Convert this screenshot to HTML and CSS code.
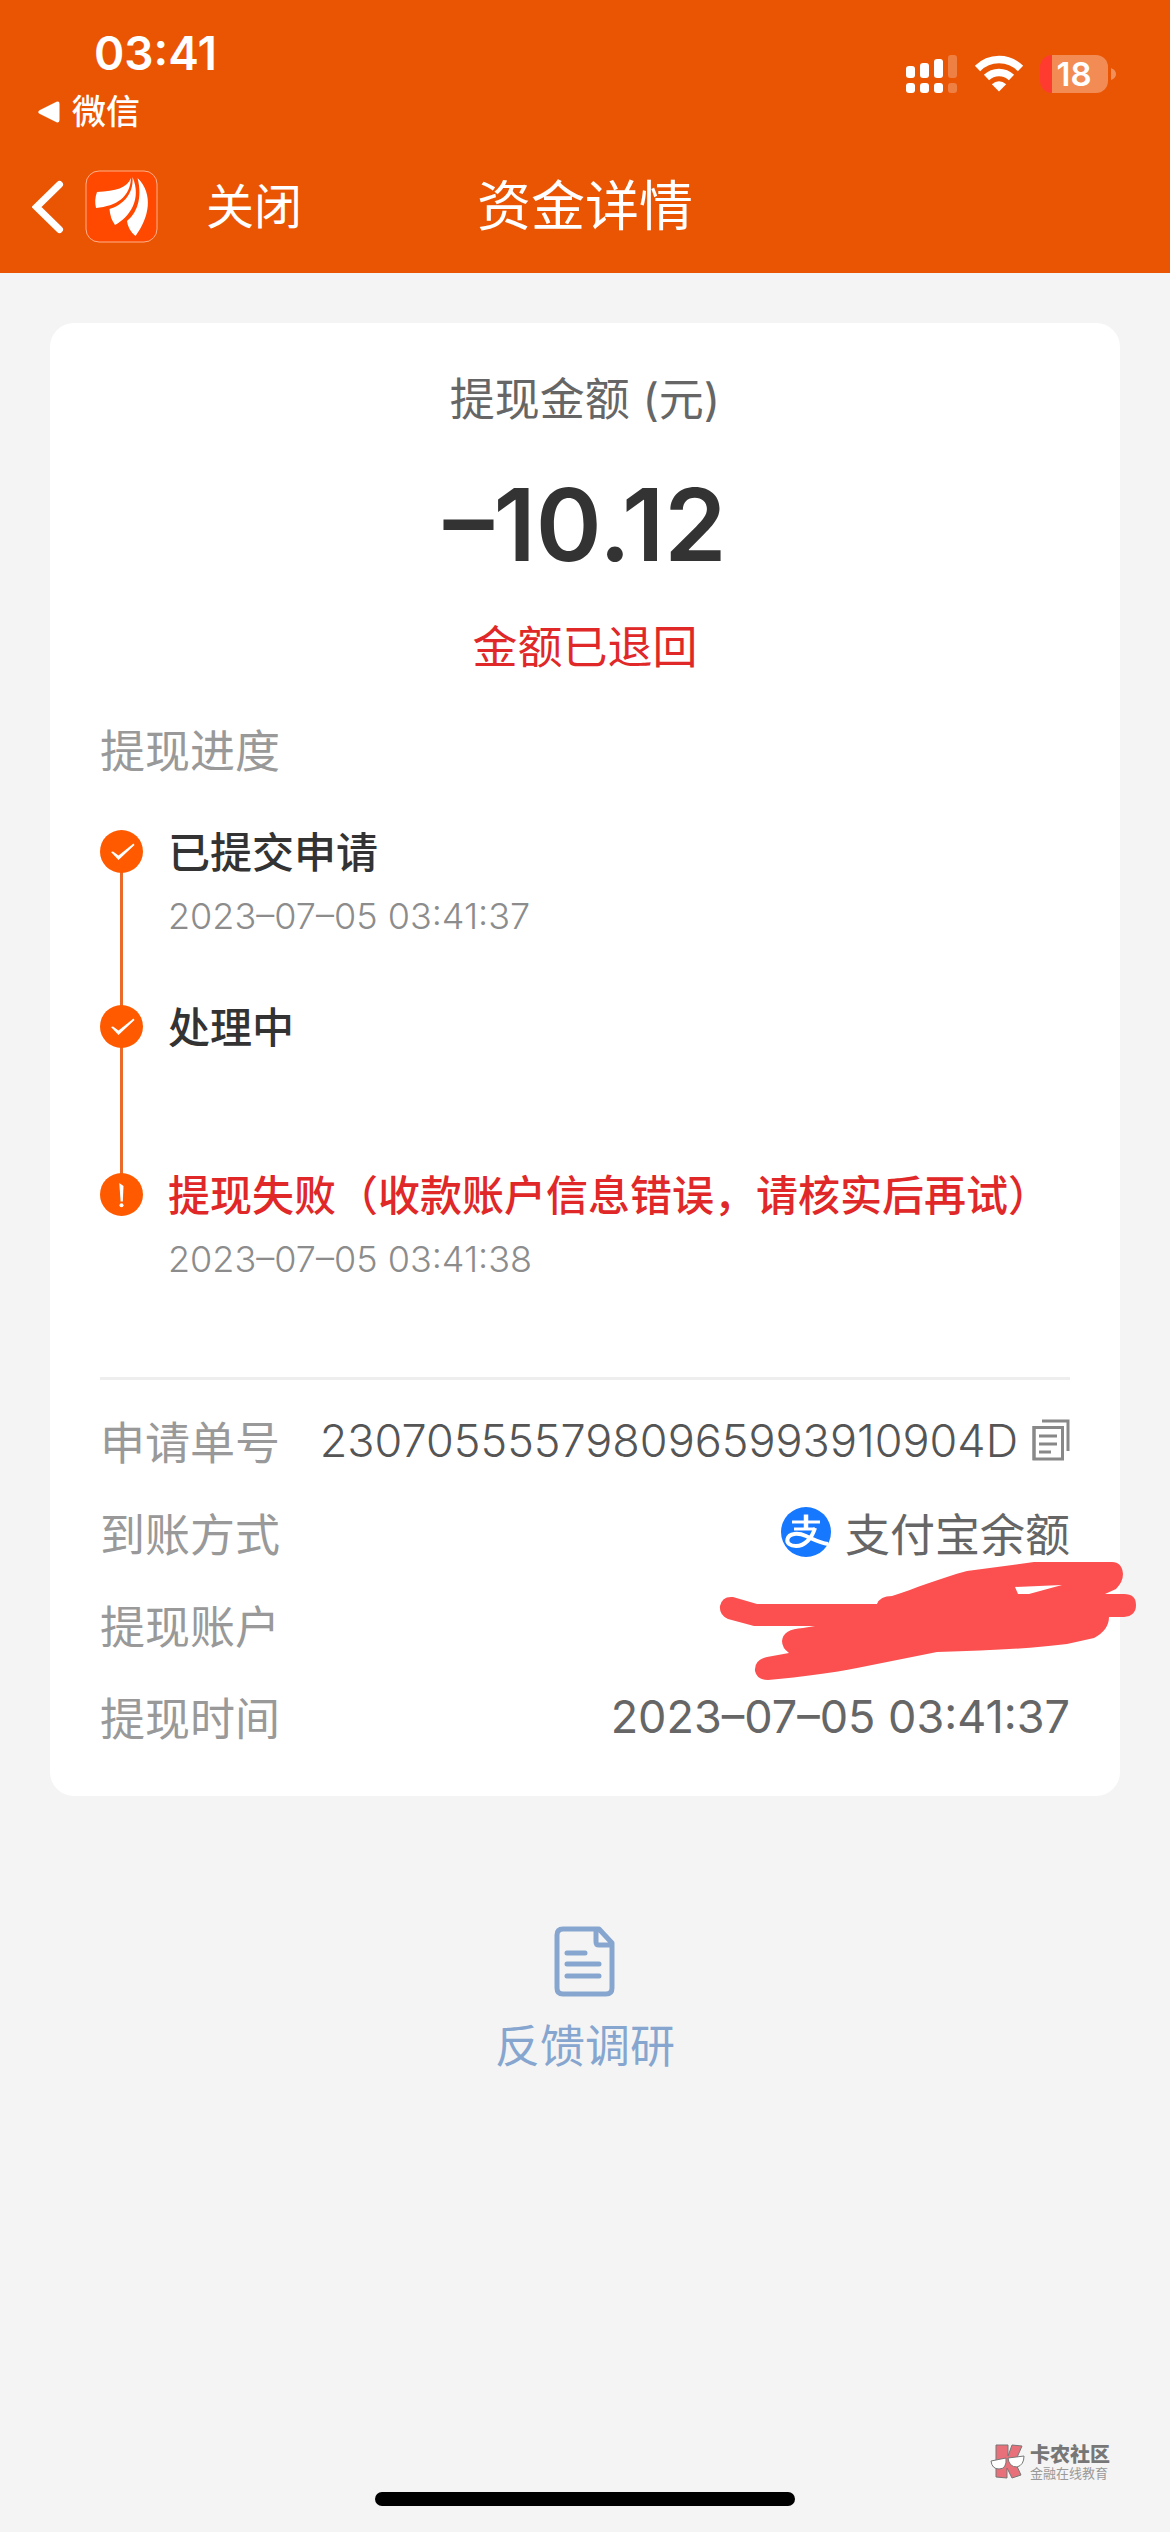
FILE: index.html
```
<!DOCTYPE html>
<html lang="zh-CN">
  <head>
    <meta charset="UTF-8" />
    <meta name="viewport" content="width=device-width, initial-scale=1.0" />
    <title>资金详情</title>
    <link rel="stylesheet" href="styles.css">
  </head>
  <body>
    <header class="header">
      <div class="status-bar">
        <div class="status-left">
          <div class="clock">03:41</div>
          <a class="back-app" href="#">
            <svg width="22" height="22" viewBox="0 0 22 22" fill="#fff">
              <path d="M1.5 9.2 18.5.8Q21.500-.3 21.500 3v16q0 3.300-3 2.200L1.500 12.800Q-1 11 1.500 9.200Z" />
            </svg>
            微信
          </a>
        </div>
        <div class="status-icons">
          <svg width="52" height="38" viewBox="0 0 52 38" fill="#fff">
            <rect x="0" y="11" width="9" height="12" rx="3" />
            <rect x="14" y="8" width="9" height="15" rx="3" />
            <rect x="28" y="4" width="9" height="19" rx="3" />
            <rect x="0" y="28" width="9" height="10" rx="3" />
            <rect x="14" y="28" width="9" height="10" rx="3" />
            <rect x="28" y="28" width="9" height="10" rx="3" />
            <g opacity="0.25">
              <rect x="42" y="0" width="9" height="23" rx="3" />
              <rect x="42" y="28" width="9" height="10" rx="3" />
            </g>
          </svg>
          <svg width="50" height="38" viewBox="0 0 50 38" fill="none" stroke="#fff">
            <path d="M3.500 13.500C15.500 1.500 34.500 1.500 46.500 13.500" stroke-width="7.500" />
            <path d="M12.500 22.500C19.500 15.700 30.500 15.700 37.500 22.500" stroke-width="7.500" />
            <path d="M25 36.500 17.800 29.200Q25 23.500 32.200 29.200Z" fill="#fff" stroke="none" />
          </svg>
          <div class="battery">
            <span class="battery-body">18</span>
            <svg width="5" height="12" viewBox="0 0 5 12" fill="#fff" fill-opacity="0.35">
              <path d="M0 0Q5 2 5 6T0 12Z" />
            </svg>
          </div>
        </div>
      </div>

      <nav class="nav-bar">
        <div class="nav-left">
          <button class="nav-back" aria-label="返回">
            <svg width="32" height="54" viewBox="0 0 32 54" fill="none" stroke="#fff" stroke-width="7" stroke-linecap="round">
              <path d="M27.500 4.500 4.500 27 27.500 49.500" />
            </svg>
          </button>
          <button class="nav-logo" aria-label="首页">
            <svg width="73" height="73" viewBox="0 0 73 73">
              <rect x="1" y="1" width="71" height="71" rx="13" fill="#ff4800" stroke="#ffb08a" />
              <g fill="#fff">
                <path d="M46 8C42 18 31 21 12 22Q9 30 11 38C32 36 45 27 46 8Z" />
                <path d="M47.500 7C49 25 36 36 24.500 39Q25 48 30 55C45 47 57 29 47.500 7Z" />
                <path d="M52.500 8C58 29 51 44 42 51Q43 60 50.500 66C64 48 69 24 52.500 8Z" />
              </g>
            </svg>
          </button>
          <button class="nav-close">关闭</button>
        </div>
        <h1 class="nav-title">资金详情</h1>
      </nav>
    </header>

    <main class="content">
      <section class="card">
        <div class="amount-label">提现金额 (元)</div>
        <div class="amount">–10.12</div>
        <div class="amount-status">金额已退回</div>

        <h2 class="section-title">提现进度</h2>
        <ol class="timeline">
          <li class="step step-tall">
            <svg class="step-icon" viewBox="0 0 43 43">
              <circle cx="21.500" cy="21.500" r="21.500" fill="#ff5a00" />
              <path d="M11 22 13 21.500 18.500 25.500 33.500 13.500 34.500 15 18.500 30Z" fill="#fff" />
            </svg>
            <div class="step-title">已提交申请</div>
            <div class="step-time">2023–07–05 03:41:37</div>
          </li>
          <li class="step">
            <svg class="step-icon" viewBox="0 0 43 43">
              <circle cx="21.500" cy="21.500" r="21.500" fill="#ff5a00" />
              <path d="M11 22 13 21.500 18.500 25.500 33.500 13.500 34.500 15 18.500 30Z" fill="#fff" />
            </svg>
            <div class="step-title">处理中</div>
          </li>
          <li class="step step-last">
            <svg class="step-icon" viewBox="0 0 43 43">
              <circle cx="21.500" cy="21.500" r="21.500" fill="#ff5a00" />
              <path d="M19.300 10 23.500 13 22.800 28.500H20.600Z" fill="#fff" />
              <circle cx="21.500" cy="32.300" r="2" fill="#fff" />
            </svg>
            <div class="step-title failed">提现失败（收款账户信息错误，请核实后再试）</div>
            <div class="step-time">2023–07–05 03:41:38</div>
          </li>
        </ol>

        <dl class="details">
          <div class="row">
            <dt>申请单号</dt>
            <dd class="order-no">
              2307055557980965993910904D
              <button class="copy" aria-label="复制">
                <svg width="38" height="42" viewBox="0 0 38 42" fill="none" stroke="#888" stroke-width="3">
                  <path d="M10 2H36V32M2 8.500H30.500V40H2ZM7 17H25M7 25H25M7 33H19" />
                  <path d="M2 7V41" />
                </svg>
              </button>
            </dd>
          </div>
          <div class="row">
            <dt>到账方式</dt>
            <dd>
              <svg width="50" height="50" viewBox="0 0 50 50">
                <circle cx="25" cy="25" r="25" fill="#1677ff" />
                <path d="M11 15H39M13 22H34M25 8V22" fill="none" stroke="#fff" stroke-width="3" />
                <path d="M25 7.500V22" stroke="#fff" stroke-width="4.500" />
                <path d="M34 21C31 31 24 39 15 39 9 39 5.500 36 6.500 32 8 26 17 25.500 25 29 33 32.500 39 36 47 37" fill="none" stroke="#fff" stroke-width="4" />
              </svg>
              支付宝余额
            </dd>
          </div>
          <div class="row">
            <dt>提现账户</dt>
            <dd class="account">
              <!-- hand-drawn cover over the account number -->
              <svg class="scribble" width="418" height="120" viewBox="0 0 418 120" fill="#fc5050">
                <path fill-rule="evenodd" d="M14 35Q3 34 1 44 0 53 9 57L35 64H96L84 66Q64 67 63 79 63 86 70 91L48 95Q35 98 36 109 38 118 49 118 102 113 138 106L218 90Q300 88 348 82L375 76Q390 68 390 55H405Q417 54 417 43T405 32H386L397 27Q404 20 404 12 403 0 393 0H315L248 9C221 16 195 27 173 34Q161 34 158 42H38ZM296 25 343 23 310 32H299Z" />
              </svg>
            </dd>
          </div>
          <div class="row">
            <dt>提现时间</dt>
            <dd>2023–07–05 03:41:37</dd>
          </div>
        </dl>
      </section>

      <a class="feedback" href="#">
        <svg width="62" height="72" viewBox="0 0 62 72" fill="none" stroke="#86a6cf" stroke-width="5" stroke-linecap="round" stroke-linejoin="round">
          <path d="M45 3H9Q3 3 3 9V62Q3 68 9 68H52Q58 68 58 62V17ZM42 4V16Q42 19 45 19H57" />
          <path d="M13 27H31M13 38H45M13 50H45" />
        </svg>
        反馈调研
      </a>
    </main>

    <footer class="footer">
      <div class="watermark">
        <svg width="36" height="36" viewBox="0 0 36 36" stroke="#777">
          <path d="M6 1 18 1 18 12 22 1 32 2 25 18 31 31 22 34 17 24 17 34 6 33Z" fill="#e8707a" />
          <path d="M1 17 16 14Q17 25 9 25 2 25 1 17ZM18 14 34 12Q34 21 27 23 19 23 18 14Z" fill="#fff" />
        </svg>
        <div>
          <div class="watermark-name">卡农社区</div>
          <div class="watermark-sub">金融在线教育</div>
        </div>
      </div>
      <div class="home-indicator"></div>
    </footer>
  </body>
</html>
```

FILE: styles.css
```
* {
  box-sizing: border-box;
}

body {
  margin: 0;
  min-height: 100vh;
  display: flex;
  flex-direction: column;
  font-family: Inter, 'Noto Sans CJK SC', sans-serif;
  font-size: 45px;
  background: #f4f4f4;
  color: #333;
}

svg {
  display: block;
  flex-shrink: 0;
}

button {
  border: 0;
  padding: 0;
  background: none;
  font: inherit;
  color: inherit;
  cursor: pointer;
}

a {
  text-decoration: none;
}

/* header */

.header {
  background: #ea5504;
  color: #fff;
}

.status-bar {
  display: flex;
  justify-content: space-between;
  align-items: flex-start;
  height: 144px;
  padding: 24px 54px 0 38px;
}

.clock {
  padding-left: 56px;
  font-size: 46px;
  font-weight: 600;
  line-height: 58px;
}

.back-app {
  display: flex;
  align-items: center;
  gap: 12px;
  color: #fff;
  font-size: 34px;
  font-weight: 500;
  line-height: 60px;
}

.status-icons {
  display: flex;
  align-items: center;
  gap: 16px;
  padding-top: 31px;
}

.battery {
  display: flex;
  align-items: center;
  gap: 3px;
}

.battery-body {
  width: 68px;
  border-radius: 12px;
  background: linear-gradient(to right, #ff3b30 12px, #f28b54 12px);
  font-size: 33px;
  font-weight: 600;
  line-height: 38px;
  text-align: center;
}

.nav-bar {
  display: grid;
  grid-template-columns: 1fr auto 1fr;
  align-items: center;
  height: 129px;
  padding: 0 32px 4px;
}

.nav-left {
  display: flex;
  align-items: center;
  gap: 21px;
}

.nav-close {
  padding-left: 27px;
  font-size: 48px;
  line-height: 70px;
}

.nav-title {
  margin: 0;
  font-size: 54px;
  font-weight: 400;
  line-height: 70px;
}

/* detail card */

.content {
  padding: 50px;
}

.card {
  padding: 42px 50px 34px;
  border-radius: 24px;
  background: #fff;
}

.amount-label,
.amount-status {
  line-height: 70px;
  text-align: center;
}

.amount-label {
  color: #666;
}

.amount {
  margin: 20px 0 18px;
  font-size: 100px;
  font-weight: 600;
  line-height: 140px;
  text-align: center;
}

.amount-status {
  color: #e02828;
}

.section-title {
  margin: 34px 0 33px;
  color: #999;
  font-size: 45px;
  font-weight: 400;
  line-height: 70px;
}

.timeline {
  margin: 0;
  padding: 0;
  list-style: none;
}

.step {
  position: relative;
  min-height: 168px;
  padding-left: 68px;
}

.step-tall {
  min-height: 175px;
}

.step-last {
  min-height: 214px;
}

/* line that joins a step to the next one */
.step:not(:last-child)::before {
  content: '';
  position: absolute;
  left: 20px;
  top: 32px;
  width: 3px;
  height: 100%;
  background: #ea6a2a;
}

.step-icon {
  position: absolute;
  left: 0;
  top: 10px;
  width: 43px;
  height: 43px;
}

.step-title {
  font-size: 42px;
  font-weight: 500;
  line-height: 66px;
}

.step-title.failed {
  color: #e02828;
}

.step-time {
  color: #8c8c8c;
  font-size: 36px;
  font-weight: 300;
  line-height: 60px;
}

.details {
  margin: 0;
  padding-top: 14px;
  border-top: 3px solid #eee;
}

.row {
  display: flex;
  justify-content: space-between;
  align-items: center;
  height: 92px;
}

.row dt {
  color: #999;
}

.row dd {
  display: flex;
  align-items: center;
  gap: 14px;
  margin: 0;
  color: #666;
}

.row .order-no {
  color: #555;
  font-weight: 300;
}

.account {
  position: relative;
}

.scribble {
  position: absolute;
  right: -67px;
  top: -62px;
}

/* feedback */

.feedback {
  display: flex;
  flex-direction: column;
  align-items: center;
  gap: 14px;
  margin-top: 130px;
  color: #86a6cf;
  line-height: 70px;
}

/* footer */

.footer {
  display: flex;
  flex-direction: column;
  gap: 12px;
  margin-top: auto;
  padding: 0 60px 26px;
}

.watermark {
  display: flex;
  align-items: center;
  align-self: flex-end;
  gap: 4px;
  color: #777;
}

.watermark-name {
  font-size: 20px;
  font-weight: 900;
  line-height: 22px;
}

.watermark-sub {
  font-size: 13px;
  line-height: 14px;
  color: #999;
}

.home-indicator {
  align-self: center;
  width: 40%;
  height: 14px;
  border-radius: 7px;
  background: #000;
}
```
